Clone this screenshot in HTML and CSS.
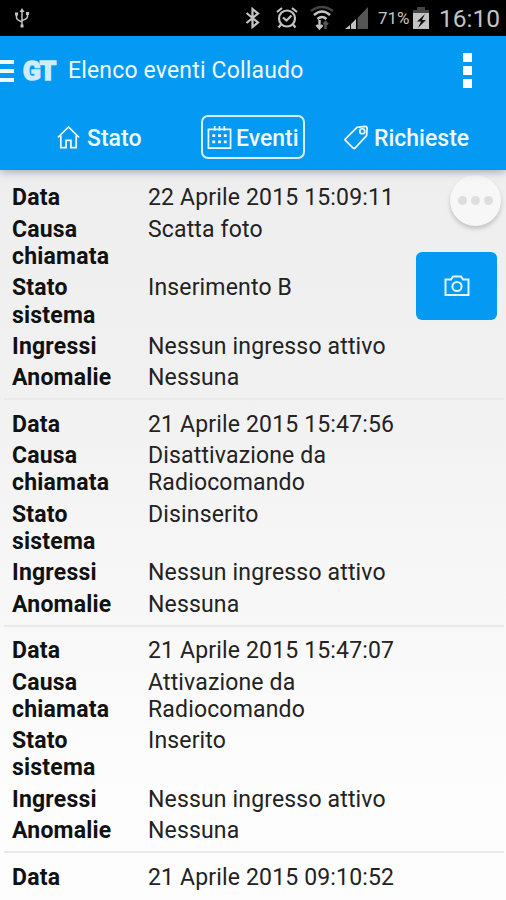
FILE: index.html
```html
<!DOCTYPE html>
<html lang="it">
<head>
    <meta charset="UTF-8">
    <meta name="viewport" content="width=device-width, initial-scale=1.0">
    <title>Elenco eventi Collaudo</title>
    <link rel="stylesheet" href="styles.css">
</head>
<body>
<div class="status-bar">
    <svg class="usb" width="16" height="20" viewBox="0 0 16 20" fill="none" stroke="#c4c4c4" stroke-width="1.5">
        <path d="M8 2v16M2.500 6v3.500q0 2.500 5.500 4.500M13.500 5v3.500q0 2.500-5.500 4"/>
        <path d="M8 0l2.500 4h-5zM1 4.500h3v3H1zM12 4h3v3h-3zM6.500 16.500h3v3h-3z" fill="#c4c4c4" stroke="none"/>
    </svg>
    <svg class="bluetooth" width="18" height="22" viewBox="0 0 18 22" fill="none" stroke="#c4c4c4" stroke-width="2.2">
        <path d="M2.500 6L14 15.500 8.500 20V2L14 6.500 2.500 16"/>
    </svg>
    <svg class="alarm" width="22" height="24" viewBox="0 0 22 24" fill="none" stroke="#c4c4c4" stroke-width="2.2">
        <circle cx="11" cy="12.500" r="8"/>
        <path d="M1 6L6 2M21 6L16 2M5 18.500l-2.500 3M17 18.500l2.500 3M7 11.500l3.500 3 5-5"/>
    </svg>
    <svg class="wifi" width="24" height="26" viewBox="0 0 24 26" fill="none" stroke-width="2.400">
        <path d="M1 6q11-8 22 0" stroke="#444"/>
        <path d="M4 10q8-7 16 0M7.500 14q4.500-4 9 0" stroke="#c4c4c4"/>
        <path d="M9.500 15v9M6.500 20l3 3.500 3-3.500" stroke="#c4c4c4"/>
        <path d="M15.500 24v-7M13.500 19.500l2-2.500 2.500 2.500" stroke="#555"/>
    </svg>
    <svg class="signal" width="24" height="24" viewBox="0 0 24 24">
        <path d="M0 23l5-4v4zM6 23v-5l5-5v10z" fill="#c4c4c4"/>
        <path d="M12.500 23V12L23 1v22z" fill="#555"/>
    </svg>
    <span class="percent">71%</span>
    <svg class="battery" width="16" height="22" viewBox="0 0 16 22">
        <path d="M4 0h8v3h4v4H0V3h4z" fill="#444"/>
        <path d="M0 6h16v16H0z" fill="#c4c4c4"/>
        <path d="M12 7L4 14.500h4L5 21l8-8H9z" fill="#111"/>
    </svg>
    <span class="clock">16:10</span>
</div>

<header>
    <div class="title-bar">
        <div class="menu"><i></i><i></i><i></i></div>
        <div class="logo"><span>G</span><span>T</span></div>
        <h1>Elenco eventi Collaudo</h1>
        <div class="overflow"><i></i><i></i><i></i></div>
    </div>
    <nav>
        <a class="tab stato">
            <svg width="25" height="25" viewBox="0 0 26 26">
                <path d="M2 13L13 2l11 11M5 11v12.500h5.500V16h5v7.500H21V11"/>
            </svg>
            <span>Stato</span>
        </a>
        <a class="tab eventi active">
            <svg width="25" height="25" viewBox="0 0 26 26">
                <path d="M1.500 4.500h23V24h-23zM8 1v5M13 1v5M18 1v5"/>
                <path class="days" d="M5.500 11h3M11.500 11h3M17.500 11h3M5.500 17.500h3M11.500 17.500h3M17.500 17.500h3"/>
            </svg>
            <span>Eventi</span>
        </a>
        <a class="tab richieste">
            <svg width="25" height="25" viewBox="0 0 26 26">
                <path d="M1.500 14.500L13.500 2.500 22 1.500q2 0 2 2L23.500 11 11.500 24q-1 .7-2 0l-8-8q-.7-.7 0-1.500z"/>
                <circle cx="19" cy="6.500" r="2.600"/>
            </svg>
            <span>Richieste</span>
        </a>
    </nav>
</header>

<main>
    <dl class="event">
        <dt>Data</dt><dd>22 Aprile 2015 15:09:11</dd>
        <dt>Causa chiamata</dt><dd>Scatta foto</dd>
        <dt>Stato sistema</dt><dd>Inserimento B</dd>
        <dt>Ingressi</dt><dd>Nessun ingresso attivo</dd>
        <dt>Anomalie</dt><dd>Nessuna</dd>
    </dl>
    <dl class="event">
        <dt>Data</dt><dd>21 Aprile 2015 15:47:56</dd>
        <dt>Causa chiamata</dt><dd>Disattivazione da Radiocomando</dd>
        <dt>Stato sistema</dt><dd>Disinserito</dd>
        <dt>Ingressi</dt><dd>Nessun ingresso attivo</dd>
        <dt>Anomalie</dt><dd>Nessuna</dd>
    </dl>
    <dl class="event">
        <dt>Data</dt><dd>21 Aprile 2015 15:47:07</dd>
        <dt>Causa chiamata</dt><dd>Attivazione da Radiocomando</dd>
        <dt>Stato sistema</dt><dd>Inserito</dd>
        <dt>Ingressi</dt><dd>Nessun ingresso attivo</dd>
        <dt>Anomalie</dt><dd>Nessuna</dd>
    </dl>
    <dl class="event last">
        <dt>Data</dt><dd>21 Aprile 2015 09:10:52</dd>
    </dl>

    <!-- floating buttons over the list -->
    <div class="more"><i></i><i></i><i></i></div>
    <div class="photo">
        <svg width="26" height="22" viewBox="0 0 26 22">
            <path d="M1.500 4.500H7L9 1.500h8l2 3h5.500V20h-23z"/>
            <circle cx="13" cy="11.500" r="4.600"/>
        </svg>
    </div>
</main>
</body>
</html>
```

FILE: styles.css
```css
* {
    box-sizing: border-box;
}

body {
    font-family: Roboto, "Liberation Sans", sans-serif;
    margin: 0;
    height: 900px;
    overflow: hidden;
    display: flex;
    flex-direction: column;
    background-color: #fff;
}

svg {
    flex: none;
    display: block;
}

.status-bar {
    height: 36px;
    flex: none;
    display: flex;
    align-items: center;
    background-color: #000;
    color: #c4c4c4;
    padding-left: 14px;
}

.bluetooth {
    margin-left: 214px;
}

.alarm {
    margin-left: 14px;
}

.wifi {
    margin-left: 12px;
}

.signal {
    margin-left: 11px;
}

.percent {
    width: 31px;
    margin-left: 9px;
    font-size: 17px;
    white-space: nowrap;
}

.battery {
    margin-left: 4px;
}

.clock {
    margin-left: 10px;
    padding-top: 1px;
    font-size: 24.5px;
    white-space: nowrap;
}

header {
    position: relative;
    z-index: 1;
    height: 134px;
    flex: none;
    background-color: #0499f2;
    color: #effaff;
    box-shadow: 0 1px 9px rgba(0, 0, 0, 0.35);
}

.title-bar {
    height: 69px;
    display: flex;
    align-items: center;
}

.menu {
    width: 14px;
    display: grid;
    gap: 5px;
}

.menu i {
    height: 4px;
    background-color: #effaff;
}

.logo {
    width: 36px;
    margin-left: 9px;
    font-size: 26px;
    font-weight: 900;
    line-height: 30px;
    color: #ccecff;
    -webkit-text-stroke: 1.6px #ccecff;
    white-space: nowrap;
}

.logo span + span {
    margin-left: -1px;
}

h1 {
    margin: 0 0 0 9px;
    font-size: 23px;
    font-weight: 400;
    letter-spacing: 0.17px;
    white-space: nowrap;
}

.overflow {
    margin: 0 34px 0 auto;
    display: grid;
    gap: 4px;
}

.overflow i {
    width: 9px;
    height: 9px;
    background-color: #fff;
}

nav {
    display: flex;
    padding-top: 10px;
}

.tab {
    height: 44px;
    display: flex;
    align-items: center;
    gap: 5px;
    font-size: 23px;
    font-weight: 500;
}

.tab span {
    padding-top: 2px;
}

.tab svg {
    fill: none;
    stroke: #effaff;
    stroke-width: 1.8;
}

.tab .days {
    stroke-width: 3;
}

.stato {
    width: 145px;
    margin-left: 56px;
    gap: 6px;
}

.active {
    width: 104px;
    padding-left: 4px;
    gap: 4px;
    border: 2px solid #d7f0ff;
    border-radius: 7px;
}

.richieste {
    margin-left: 39px;
}

main {
    position: relative;
    flex: 1;
    min-height: 0;
    padding: 4px 2px 0 4px;
    background: linear-gradient(#eeeeee, #f1f1f1 30%, #fdfdfd 85%);
}

.event {
    display: grid;
    grid-template-columns: 110px 270px;
    column-gap: 26px;
    row-gap: 4.2px;
    height: 226.4px;
    align-content: start;
    margin: 0;
    padding: 10.4px 8px 0;
    border-bottom: 2px solid #e9e9e9;
    font-size: 23px;
    line-height: 27.2px;
    color: #111;
}

.last {
    height: auto;
    border-bottom: 0;
}

.event dt {
    font-weight: 700;
    letter-spacing: 0.2px;
}

.event dd {
    margin: 0;
    width: 252px;
    color: #222;
    letter-spacing: 0.16px;
}

.more {
    position: absolute;
    top: 5px;
    right: 5px;
    width: 51px;
    height: 51px;
    border-radius: 50%;
    display: flex;
    align-items: center;
    justify-content: center;
    gap: 4px;
    background-color: #f7f7f7;
    box-shadow: 0 3px 4px rgba(0, 0, 0, 0.18);
}

.more i {
    width: 9px;
    height: 9px;
    border-radius: 50%;
    background-color: #dedede;
}

.photo {
    position: absolute;
    top: 82px;
    right: 9px;
    width: 81px;
    height: 68px;
    border-radius: 6px;
    display: flex;
    align-items: center;
    justify-content: center;
    background-color: #0499f2;
}

.photo svg {
    fill: none;
    stroke: #e4f5ff;
    stroke-width: 2;
}
```
